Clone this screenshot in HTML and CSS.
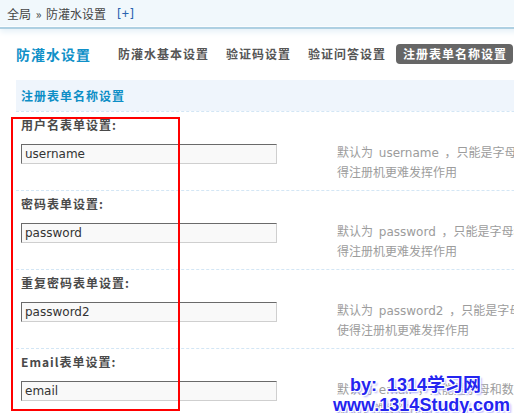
FILE: index.html
```html
<!DOCTYPE html>
<html lang="zh-CN">
<head>
<meta charset="utf-8">
<title>防灌水设置</title>
<link rel="stylesheet" href="styles.css">
</head>
<body>
<div class="crumb">
  <span class="crumb-text">全局 &raquo; 防灌水设置</span><a class="crumb-add">[+]</a>
</div>
<div class="main">
  <div class="nav">
    <h1 class="title">防灌水设置</h1>
    <ul class="tabs">
      <li class="tab">防灌水基本设置</li>
      <li class="tab">验证码设置</li>
      <li class="tab">验证问答设置</li>
      <li class="tab active">注册表单名称设置</li>
    </ul>
  </div>
  <div class="band">注册表单名称设置</div>
  <div class="row">
    <div class="label">用户名表单设置:</div>
    <div class="field">
      <input class="input" type="text" value="username">
      <div class="desc">默认为 username ，只能是字母和数字组成，修改后会使得注册机更难发挥作用</div>
    </div>
  </div>
  <div class="row">
    <div class="label">密码表单设置:</div>
    <div class="field">
      <input class="input" type="text" value="password">
      <div class="desc">默认为 password ，只能是字母和数字组成，修改后会使得注册机更难发挥作用</div>
    </div>
  </div>
  <div class="row">
    <div class="label">重复密码表单设置:</div>
    <div class="field">
      <input class="input" type="text" value="password2">
      <div class="desc">默认为 password2 ，只能是字母和数字组成，修改后会使得注册机更难发挥作用</div>
    </div>
  </div>
  <div class="row">
    <div class="label">Email表单设置:</div>
    <div class="field">
      <input class="input" type="text" value="email">
      <div class="desc">默认为 email ，只能是字母和数字组成，修改后会使得注册机更难发挥作用</div>
    </div>
  </div>
</div>
<div class="highlight"></div>
<div class="watermark">
  <div class="wm-line1">by:&nbsp; 1314学习网</div>
  <div class="wm-line2">www.1314Study.com</div>
</div>
</body>
</html>
```

FILE: styles.css
```css
html, body {
  margin: 0;
  padding: 0;
  overflow: hidden;
  background: #fff;
}
body {
  width: 900px;
  height: 413px;
  position: relative;
  font-family: "DejaVu Sans", "Noto Sans CJK SC", sans-serif;
  font-size: 12px;
  color: #444;
}
.crumb {
  height: 27px;
  background: #f1f8fc;
  border-bottom: 2px solid #aed0e2;
  box-shadow: inset 0 -1px 0 #fafdff, 0 3px 6px #e6f1f8;
  display: flex;
  align-items: center;
  padding-left: 7px;
}
.crumb-text {
  font-family: "Noto Sans CJK SC", sans-serif;
  font-size: 12px;
  color: #454545;
  word-spacing: 2px;
}
.crumb-add {
  font-family: "DejaVu Sans Mono", monospace;
  font-size: 12px;
  color: #2a64b0;
  margin-left: 9px;
  letter-spacing: -0.5px;
}
.main {
  margin-left: 16px;
}
.nav {
  display: flex;
  align-items: center;
  height: 20px;
  margin-top: 15px;
  margin-bottom: 16px;
}
.title {
  margin: 0 20px 0 0;
  font-family: "Noto Sans CJK SC", sans-serif;
  font-size: 14px;
  font-weight: bold;
  letter-spacing: 1px;
  color: #1090c8;
  line-height: 20px;
}
.tabs {
  display: flex;
  gap: 4px;
  margin: 0;
  padding: 0;
  list-style: none;
}
.tab {
  font-family: "Noto Sans CJK SC", sans-serif;
  font-size: 12px;
  font-weight: bold;
  letter-spacing: 1px;
  color: #555;
  line-height: 20px;
  height: 20px;
  padding: 0 6px 0 7px;
  border-radius: 4px;
}
.tab.active {
  background: #666;
  color: #fff;
}
.band {
  height: 31px;
  line-height: 31px;
  background: #eff5fc;
  padding-left: 5px;
  font-family: "Noto Sans CJK SC", sans-serif;
  font-size: 12px;
  font-weight: bold;
  letter-spacing: 1px;
  color: #0d8ec6;
}
.row {
  border-top: 1px dashed #d3e6f5;
  padding: 5px 0 6px 5px;
}
.label {
  font-family: "Noto Sans CJK SC", sans-serif;
  font-size: 12px;
  font-weight: bold;
  letter-spacing: 1px;
  color: #4a4a4a;
  line-height: 16px;
  height: 16px;
  margin-bottom: 11px;
}
.field {
  display: flex;
  align-items: flex-start;
  height: 40px;
}
.input {
  box-sizing: border-box;
  width: 256px;
  height: 20px;
  margin: 0;
  padding: 0 3px;
  border: 1px solid;
  border-color: #6a6a6a #cfcfcf #cfcfcf #6a6a6a;
  background: #f9f9f9;
  font-family: "DejaVu Sans", sans-serif;
  font-size: 12px;
  color: #333;
  outline: none;
}
.desc {
  margin-left: 60px;
  width: 316px;
  line-height: 20px;
  margin-top: -1px;
  color: #9c9c9c;
  font-family: "DejaVu Sans", "Noto Sans CJK SC", sans-serif;
  font-size: 12px;
  word-spacing: 2px;
}
.highlight {
  position: absolute;
  left: 11px;
  top: 117px;
  width: 165px;
  height: 290px;
  border: 2px solid #ff0000;
}
.watermark {
  position: absolute;
  left: 333px;
  top: 375px;
  font-family: "Liberation Sans", "Noto Sans CJK SC", sans-serif;
  font-weight: bold;
  font-size: 18px;
  line-height: 20px;
  color: #2424f0;
  text-shadow: 1px 1px 0 #fff, -1px -1px 0 #fff, 1px -1px 0 #fff, -1px 1px 0 #fff, 2px 2px 2px #b0b0ff;
}
.wm-line1 {
  padding-left: 17px;
}
```
